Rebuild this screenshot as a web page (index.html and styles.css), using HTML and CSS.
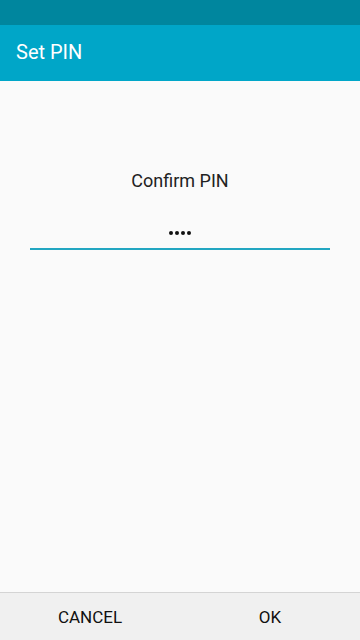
FILE: index.html
```html
<!DOCTYPE html>
<html lang="en">
<head>
  <meta charset="UTF-8">
  <meta name="viewport" content="width=device-width, initial-scale=1.0">
  <title>Set PIN</title>
  <link rel="stylesheet" href="styles.css">
</head>
<body>
  <div class="screen">
    <div class="status-bar"></div>
    <div class="app-bar">
      <div class="app-title">Set PIN</div>
    </div>

    <div class="content">
      <div class="prompt">Confirm PIN</div>
      <!-- masked PIN entry -->
      <div class="pin-field">
        <span class="dot"></span>
        <span class="dot"></span>
        <span class="dot"></span>
        <span class="dot"></span>
      </div>
    </div>

    <!-- Bottom buttons -->
    <div class="button-bar">
      <button class="bar-button">CANCEL</button>
      <button class="bar-button">OK</button>
    </div>
  </div>
</body>
</html>
```

FILE: styles.css
```css
body, html {
  margin: 0;
  padding: 0;
  height: 100%;
  font-family: Roboto, "Noto Sans", Arial, sans-serif;
}

.screen {
  width: 360px;
  height: 640px;
  display: flex;
  flex-direction: column;
  background: #fafafa;
}

.status-bar {
  height: 25px;
  background: #00869e;
}

.app-bar {
  height: 56px;
  background: #00a6c8;
  display: flex;
  align-items: center;
  padding-left: 16px;
}

.app-title {
  color: #ffffff;
  font-size: 20px;
  margin-top: -2px;
}

.content {
  flex-grow: 1;
  display: flex;
  flex-direction: column;
  align-items: center;
  padding-top: 88px;
}

.prompt {
  font-size: 18px;
  color: #222222;
  line-height: 24px;
}

.pin-field {
  width: 300px;
  height: 36px;
  margin-top: 19px;
  border-bottom: 2px solid #22a6c1;
  display: flex;
  justify-content: center;
  align-items: center;
  gap: 2px;
}

.dot {
  width: 4px;
  height: 4px;
  border-radius: 50%;
  background: #111111;
  margin-top: 6px;
}

.button-bar {
  height: 47px;
  border-top: 1px solid #d4d4d4;
  background: #f0f0f0;
  display: flex;
}

.bar-button {
  flex: 1;
  border: none;
  background: none;
  font-family: Roboto, "Noto Sans", Arial, sans-serif;
  font-size: 17px;
  color: #111111;
  padding: 0;
  margin-top: 1px;
}
```
